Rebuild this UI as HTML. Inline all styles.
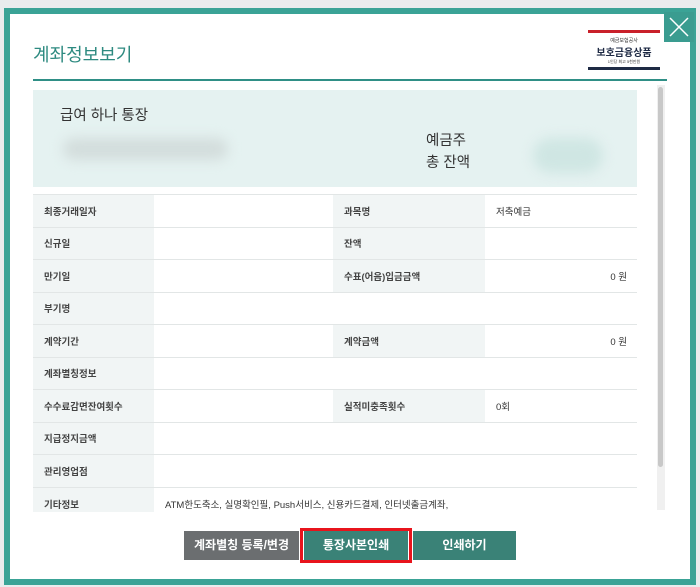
<!DOCTYPE html>
<html><head><meta charset="utf-8"><style>
*{margin:0;padding:0;box-sizing:border-box}
body{width:700px;height:587px;background:#e9eced;position:relative;overflow:hidden;font-family:"Liberation Sans","Noto Sans CJK KR",sans-serif;color:#333}
.frame{position:absolute;left:4px;top:8px;width:692px;height:577px;border:6px solid #3aa396;background:#fff}
.close{position:absolute;left:664px;top:12px;width:30px;height:30px;background:#3a9c90}
.title{position:absolute;left:33px;top:41px;font-size:18px;color:#2d8a80}
.line{position:absolute;left:33px;top:79px;width:634px;height:2px;background:#2f8f86}
.logo{position:absolute;left:588px;top:30px;width:72px;height:40px;border-top:3px solid #c9202a;border-bottom:3px solid #1e2a44;background:#fff;text-align:center}
.sum{position:absolute;left:33px;top:90px;width:604px;height:97px;background:#e5f2f1;font-size:14.5px}
.blur{position:absolute;border-radius:20px;filter:blur(6px)}
.tw{position:absolute;left:33px;top:194px;width:604px;height:318px;overflow:hidden}
table{width:604px;border-collapse:collapse;font-size:9.5px}
td{height:32.5px;border-top:1px solid #e2e6e6;padding-left:11px}
td.l{background:#f1f5f5;width:121px;font-weight:bold;color:#444}
td.v{width:179px}
td.l2{background:#f1f5f5;width:152px;font-weight:bold;color:#444}
td.r{text-align:right;padding-right:10px}
.sb{position:absolute;left:657px;top:85px;width:8px;height:425px;background:#f0f0f0}
.sb div{position:absolute;left:1px;top:2px;width:5px;height:380px;background:#c8c8c8;border-radius:3px}
.btn{position:absolute;top:531px;height:29px;color:#fff;font-size:12px;text-align:center;line-height:29px;font-weight:bold}
</style></head><body>
<div class="frame"></div>
<div class="close"><svg width="30" height="30"><path d="M6 6L24 24M24 6L6 24" stroke="#fff" stroke-width="1.5"/></svg></div>
<div class="title">계좌정보보기</div>
<div class="logo"><div style="font-size:5px;margin-top:4px">예금보험공사</div><div style="font-size:10px;font-weight:bold;color:#1e2a44">보호금융상품</div><div style="font-size:4px">1인당 최고 5천만원</div></div>
<div class="line"></div>
<div class="sum">
<div style="position:absolute;left:27px;top:14px">급여 하나 통장</div>
<div style="position:absolute;left:393px;top:40px;line-height:22px">예금주<br>총 잔액</div>
<div class="blur" style="left:30px;top:48px;width:165px;height:22px;background:#d3dddc"></div>
<div class="blur" style="left:500px;top:48px;width:70px;height:35px;background:#cfe6e3"></div>
</div>
<div class="tw"><table>
<tr><td class="l">최종거래일자</td><td class="v"></td><td class="l2">과목명</td><td>저축예금</td></tr>
<tr><td class="l">신규일</td><td class="v"></td><td class="l2">잔액</td><td></td></tr>
<tr><td class="l">만기일</td><td class="v"></td><td class="l2">수표(어음)입금금액</td><td class="r">0 원</td></tr>
<tr><td class="l">부기명</td><td colspan="3"></td></tr>
<tr><td class="l">계약기간</td><td class="v"></td><td class="l2">계약금액</td><td class="r">0 원</td></tr>
<tr><td class="l">계좌별칭정보</td><td colspan="3"></td></tr>
<tr><td class="l">수수료감면잔여횟수</td><td class="v"></td><td class="l2">실적미충족횟수</td><td>0회</td></tr>
<tr><td class="l">지급정지금액</td><td colspan="3"></td></tr>
<tr><td class="l">관리영업점</td><td colspan="3"></td></tr>
<tr><td class="l">기타정보</td><td colspan="3">ATM한도축소, 실명확인필, Push서비스, 신용카드결제, 인터넷출금계좌,</td></tr>
</table></div>
<div class="sb"><div></div></div>
<div class="btn" style="left:184px;width:115px;background:#6b6e70">계좌별칭 등록/변경</div>
<div style="position:absolute;left:300px;top:528px;width:112px;height:35px;border:3px solid #e8141c"></div>
<div class="btn" style="left:304px;width:104px;background:#3a8277">통장사본인쇄</div>
<div class="btn" style="left:413px;width:103px;background:#3a8277">인쇄하기</div>
</body></html>
